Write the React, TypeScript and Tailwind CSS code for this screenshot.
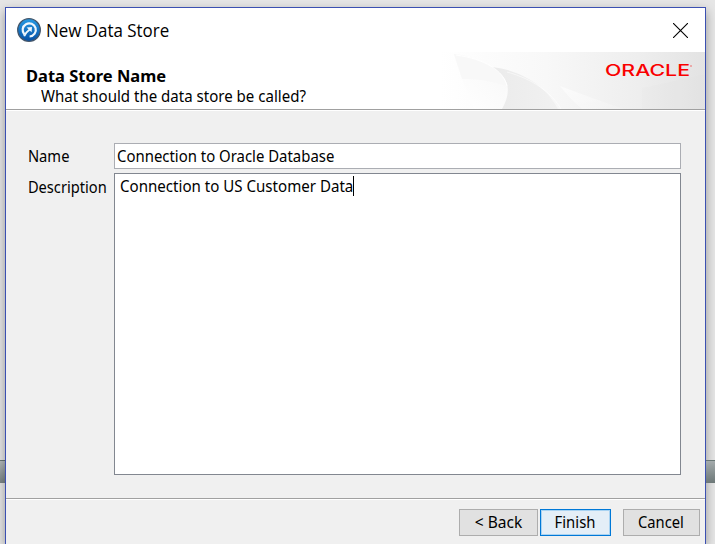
import type { ReactNode } from "react";

function AppIcon() {
  return (
    <svg className="h-6 w-6 shrink-0" viewBox="0 0 24 24" fill="none">
      <defs>
        <linearGradient id="disc" x1="0" y1="0" x2="0" y2="1">
          <stop offset="0" stopColor="#259be5" />
          <stop offset="1" stopColor="#064fa4" />
        </linearGradient>
      </defs>
      <circle cx="12" cy="12" r="11.3" fill="url(#disc)" stroke="#44566a" strokeWidth="1.3" />
      <path d="M7.4 16.4A6.6 6.6 0 1 1 12.6 18.5" stroke="#eef6fc" strokeWidth="2.2" />
      <path d="M7.2 18.2C8.2 15.4 10.2 13.2 13 11.2" stroke="#eef6fc" strokeWidth="1.9" />
      <path d="M9.6 9.6L15 9L14.6 14.2Z" fill="#eef6fc" />
    </svg>
  );
}

function HeaderArt() {
  return (
    <svg className="absolute top-0 right-0 h-[57px] w-[265px]" viewBox="0 0 265 57" preserveAspectRatio="none">
      <defs>
        <linearGradient id="base" x1="0" y1="0" x2="1" y2="0">
          <stop offset="0" stopColor="#fff" />
          <stop offset=".4" stopColor="#f8f8f8" />
          <stop offset=".75" stopColor="#eeeeee" />
          <stop offset="1" stopColor="#e3e3e3" />
        </linearGradient>
        <linearGradient id="petal" x1="0" y1="1" x2="1" y2="0">
          <stop offset="0" stopColor="#fff" />
          <stop offset="1" stopColor="#f7f7f7" />
        </linearGradient>
        <linearGradient id="blade" x1="0" y1="0" x2="1" y2="0">
          <stop offset="0" stopColor="#ebebeb" />
          <stop offset="1" stopColor="#f1f1f1" />
        </linearGradient>
        <linearGradient id="shine" x1="0" y1="0" x2="1" y2="1">
          <stop offset="0" stopColor="#fff" stopOpacity=".6" />
          <stop offset="1" stopColor="#fff" stopOpacity=".1" />
        </linearGradient>
      </defs>
      <path d="M0 0H265V57H0Z" fill="url(#base)" />
      <path d="M14 2C42 6 63 18 67 34L62 57H34L22 27Z" fill="url(#petal)" />
      <path d="M14 2C42 6 63 18 67 34Q42 26 22 27Z" fill="#f8f8f8" />
      <path d="M52 15C85 19 108 37 118 57H62Q70 43 67 32Q64 23 52 15Z" fill="url(#blade)" />
      <path d="M16 3C45 7 64 19 67 34" fill="none" stroke="#fff" strokeOpacity=".9" />
      <path d="M67 20C93 27 112 41 121 57" fill="none" stroke="#fff" strokeOpacity=".5" />
      <path d="M120 34Q154 47 184 57H142Q130 47 120 34Z" fill="url(#shine)" />
      <path d="M202 36L265 22V57H202Z" fill="#dedede" fillOpacity=".12" />
    </svg>
  );
}

function Button({ children, className }: { children: ReactNode; className: string }) {
  return (
    <button className={`flex h-[27px] shrink-0 items-center justify-center border pb-[2px] text-[16px] leading-none ${className}`}>
      {children}
    </button>
  );
}

export default function App() {
  return (
    <div className="flex h-[544px] w-[715px] overflow-hidden bg-[#e6e6e6] font-['Noto_Sans',sans-serif] text-[16px] text-black">
      <div className="w-[5px] shrink-0 pt-[460px]">
        <div className="h-[23px] border-t border-[#687775] bg-gradient-to-b from-[#b4babb] to-[#7b8585]" />
      </div>
      <div className="flex w-[701px] shrink-0 flex-col pt-[7px]">
        <div className="flex h-[537px] flex-col border border-b-0 border-[#3b50b2] bg-[#f0f0f0] shadow-[0_4px_10px_rgba(0,0,0,0.35)]">
          <div className="flex h-[44px] shrink-0 items-center bg-white pl-[11px] pr-[17px]">
            <AppIcon />
            <span className="ml-[5px] flex-1 origin-left scale-x-[0.94] whitespace-nowrap pb-[1px] font-['Open_Sans',sans-serif] text-[18px] leading-6">New Data Store</span>
            <svg className="h-[15px] w-[15px]" viewBox="0 0 15 15" stroke="#000" strokeWidth="1.1">
              <path d="M0 0L15 15M15 0L0 15" />
            </svg>
          </div>
          <div className="relative h-[57px] shrink-0 bg-white">
            <HeaderArt />
            <div className="relative flex justify-between pl-5 pr-[13px]">
              <div className="pt-[14px] leading-5">
                <div className="origin-left scale-x-[1.03] whitespace-nowrap font-bold">Data Store Name</div>
                <div className="ml-[15px] origin-left scale-x-[0.94] whitespace-nowrap">What should the data store be called?</div>
              </div>
              <svg className="mt-[10px] h-[16px] w-[87px] overflow-visible font-['Inter',sans-serif]" fill="#fa0000">
                <text x="0" y="13.5" fontSize="15.5" fontWeight="500" textLength="85" lengthAdjust="spacingAndGlyphs">ORACLE</text>
                <circle cx="86" cy="4" r=".8" fillOpacity=".6" />
              </svg>
            </div>
          </div>
          <div className="h-[2px] shrink-0 border-t border-b border-t-[#a0a0a0] border-b-white" />
          <div className="flex h-[387px] shrink-0 flex-col gap-1 pl-[21px] pt-[32px]">
            <div className="flex h-[26px] items-center">
              <label className="w-[87px] shrink-0 origin-left scale-x-[0.92] whitespace-nowrap pl-[1px]">Name</label>
              <div className="flex h-[26px] w-[567px] items-center whitespace-nowrap border border-[#abadb3] bg-white pl-[2px]">
                <span className="origin-left scale-x-[0.932]">Connection to Oracle Database</span>
              </div>
            </div>
            <div className="flex">
              <label className="w-[87px] shrink-0 origin-left scale-x-[0.915] whitespace-nowrap pl-[1px] pt-[4px] leading-5">Description</label>
              <div className="flex h-[302px] w-[567px] items-start whitespace-nowrap border border-[#828790] bg-white pl-[5px] pt-[2px] leading-5">
                <span className="w-[233px]">
                  <span className="inline-block origin-left scale-x-[0.943]">Connection to US Customer Data</span>
                </span>
                <span className="h-5 w-px bg-black" />
              </div>
            </div>
          </div>
          <div className="h-[2px] shrink-0 border-t border-b border-t-[#a0a0a0] border-b-white" />
          <div className="flex pl-[453px] pt-[9px]">
            <Button className="w-[79px] border-[#adadad] bg-[#e1e1e1]">
              <span className="scale-x-[0.97]">&lt; Back</span>
            </Button>
            <Button className="ml-[2px] w-[71px] border-[#0078d7] bg-[#e4eef7] shadow-[inset_0_0_0_1px_#a9d3f2]">
              <span className="scale-x-[0.93]">Finish</span>
            </Button>
            <Button className="ml-3 w-[77px] border-[#adadad] bg-[#e1e1e1]">
              <span className="-translate-x-[1px] scale-x-[0.92]">Cancel</span>
            </Button>
          </div>
        </div>
      </div>
      <div className="flex-1 pt-[460px]">
        <div className="h-[23px] border-t border-[#687775] bg-gradient-to-b from-[#a4abac] to-[#6d7878]" />
      </div>
    </div>
  );
}
